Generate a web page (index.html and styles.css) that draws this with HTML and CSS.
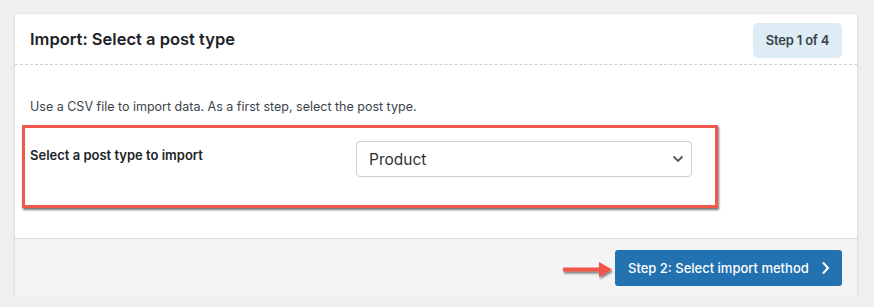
FILE: index.html
```html
<!DOCTYPE html>
<html lang="en">
<head>
  <meta charset="UTF-8">
  <meta name="viewport" content="width=device-width, initial-scale=1.0">
  <title>Import: Select a post type</title>
  <link rel="stylesheet" href="styles.css">
</head>
<body>
  <div class="card">
    <header class="card-head">
      <h1>Import: Select a post type</h1>
      <span class="step-badge">Step 1 of 4</span>
    </header>

    <div class="card-body">
      <p class="intro">Use a CSV file to import data. As a first step, select the post type.</p>
      <div class="highlight">
        <label for="postType">Select a post type to import</label>
        <div class="select-wrap">
          <select id="postType" name="postType">
            <option>Product</option>
            <option>Post</option>
            <option>Page</option>
          </select>
          <svg class="chevron" width="12" height="8" viewBox="0 0 12 8"><path d="M1.5 1.5 L6 6 L10.5 1.5" fill="none" stroke="#50575e" stroke-width="1.8"/></svg>
        </div>
      </div>
    </div>

    <footer class="card-foot">
      <svg class="arrow" width="58" height="24" viewBox="0 0 58 24">
        <defs>
          <filter id="drop" x="-20%" y="-40%" width="140%" height="180%">
            <feDropShadow dx="1" dy="2" stdDeviation="1.3" flood-color="#000" flood-opacity="0.5"/>
          </filter>
        </defs>
        <path d="M3 9.5 H39 V4 L52 11.5 L39 19 V13.5 H3 Z" fill="#ef5448" filter="url(#drop)"/>
      </svg>
      <button type="button" class="next-btn">Step 2: Select import method
        <svg width="9" height="14" viewBox="0 0 9 14"><path d="M2 1.5 L7 7 L2 12.5" fill="none" stroke="#fff" stroke-width="2"/></svg>
      </button>
    </footer>
  </div>
</body>
</html>
```

FILE: styles.css
```css
* { box-sizing: border-box; }
body {
  margin: 0;
  padding: 14px 17px 0 15px;
  background: #f0f0f1;
  font-family: Inter, "Noto Sans", sans-serif;
  color: #1e1e1e;
}
.card {
  background: #fff;
  box-shadow: 0 1px 3px rgba(0,0,0,0.18);
}
.card-head {
  height: 51px;
  padding: 0 15px;
  display: flex;
  align-items: center;
  justify-content: space-between;
  border-bottom: 1px dashed #cfcfcf;
}
.card-head h1 {
  margin: 0;
  font-size: 16.5px;
  font-weight: 600;
  color: #1d2327;
}
.step-badge {
  display: inline-flex;
  align-items: center;
  justify-content: center;
  width: 89px;
  height: 35px;
  margin-top: 2px;
  border-radius: 5px;
  background: #deedf5;
  font-size: 13px;
  font-weight: 600;
  color: #3c434a;
  letter-spacing: -0.2px;
}
.card-body {
  padding: 33px 15px 30px 7px;
}
.intro {
  margin: 0 0 9px 8px;
  font-size: 12.5px;
  line-height: 18px;
  color: #3c434a;
}
.highlight {
  width: 696px;
  height: 83px;
  border: 3px solid #f2594c;
  box-shadow: 1px 2px 2px rgba(0,0,0,0.55);
  padding: 13px 5px 0;
  display: grid;
  grid-template-columns: 326px 336px;
  align-items: start;
}
.highlight label {
  margin-top: 5px;
  font-size: 13px;
  line-height: 18px;
  font-weight: 600;
  color: #1d2327;
}
.select-wrap {
  position: relative;
}
.select-wrap select {
  appearance: none;
  width: 336px;
  height: 36px;
  padding: 0 12px;
  border: 1px solid #ccd0d4;
  border-radius: 4px;
  background: #fff;
  font-family: inherit;
  font-size: 15.5px;
  color: #2c3338;
}
.chevron {
  position: absolute;
  right: 8px;
  top: 14px;
  pointer-events: none;
}
.card-foot {
  position: relative;
  height: 59px;
  border-top: 1px solid #dcdcde;
  background: #f4f4f4;
  display: flex;
  align-items: center;
  justify-content: flex-end;
  padding: 0 15px 1px;
}
.arrow {
  position: absolute;
  left: 545px;
  top: 19px;
}
.next-btn {
  display: inline-flex;
  align-items: center;
  gap: 12px;
  height: 36px;
  width: 227px;
  padding: 0 0 0 13px;
  border: none;
  border-radius: 3px;
  background: #2271b1;
  color: #fff;
  font-family: inherit;
  font-size: 13px;
  font-weight: 500;
  cursor: pointer;
}
```
